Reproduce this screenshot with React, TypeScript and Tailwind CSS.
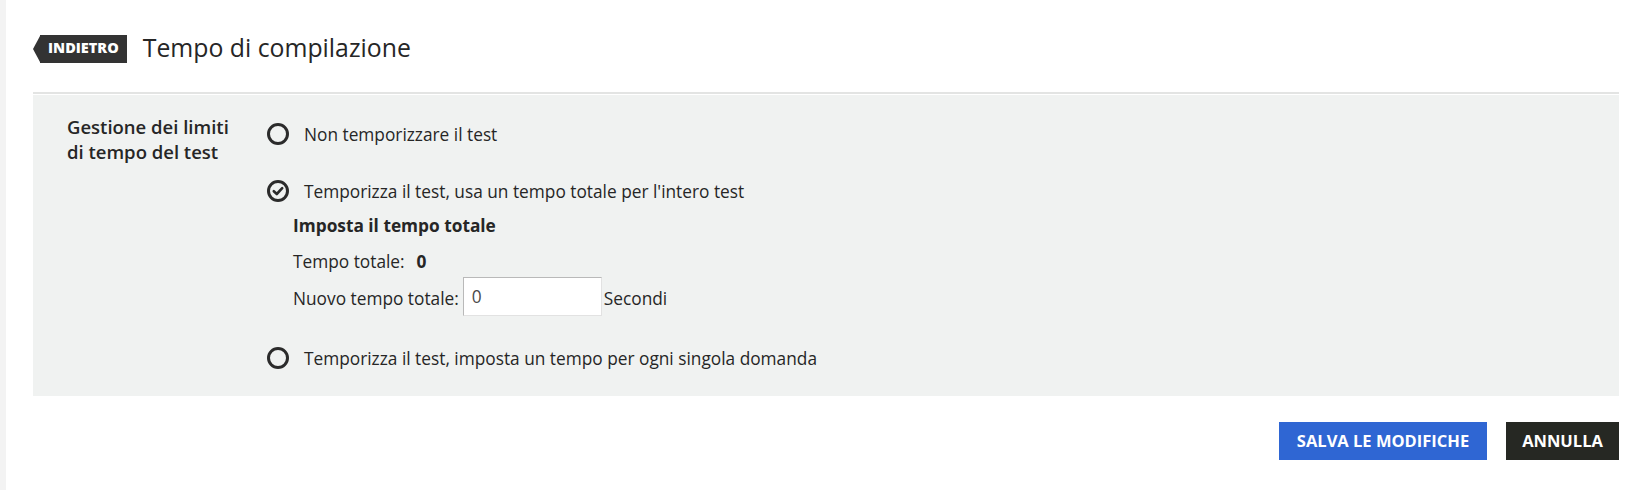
import React from "react";

function RadioOff() {
  return (
    <span className="w-[22px] h-[22px] rounded-full border-[3px] border-[#2b2b2b] shrink-0 box-border" />
  );
}

function RadioOn() {
  return (
    <svg width="22" height="22" viewBox="0 0 22 22" className="shrink-0">
      <circle cx="11" cy="11" r="9.5" fill="none" stroke="#2b2b2b" strokeWidth="3" />
      <path d="M6.8 11.2 L9.8 14 L15.2 8.2" fill="none" stroke="#2b2b2b" strokeWidth="2.6" strokeLinecap="round" strokeLinejoin="round" />
    </svg>
  );
}

export default function App() {
  return (
    <div
      className="min-h-screen bg-white flex text-[#262626]"
      style={{ fontFamily: '"Open Sans", "Noto Sans", sans-serif' }}
    >
      <div className="w-[6px] bg-[#f3f3f3] shrink-0" />
      <div className="flex-1 pl-[27px] pr-[17px]">
        <div className="flex items-center pt-[34px] h-[29px] box-content">
          <div className="flex items-stretch h-[28px]">
            <svg width="7" height="28" viewBox="0 0 7 28" className="block">
              <polygon points="7.5,0 7.5,28 0,14" fill="#333333" />
            </svg>
            <div className="bg-[#333333] text-white text-[14.5px] font-extrabold flex items-center pl-[8px] pr-[8px] leading-none">
              INDIETRO
            </div>
          </div>
          <h1 className="ml-[16px] text-[24.8px] leading-none font-normal text-[#262626] -mt-[2px]">
            Tempo di compilazione
          </h1>
        </div>

        <div className="mt-[29px] border-t-2 border-[#e3e4e3] bg-[#f0f2f1] shadow-[inset_0_1px_0_#ffffff] pl-[34px] flex text-[17.3px]">
          <div className="w-[200px] shrink-0 pt-[20px] font-semibold text-[18.5px] leading-[25px]">
            Gestione dei limiti
            <br />
            di tempo del test
          </div>
          <div className="pt-[28px] pb-[26px]">
            <div className="flex items-center h-6 gap-[15px]">
              <RadioOff />
              <span className="leading-6 mt-[1px]">Non temporizzare il test</span>
            </div>
            <div className="flex items-center h-6 gap-[15px] mt-[33px]">
              <RadioOn />
              <span className="leading-6 mt-[1px]">Temporizza il test, usa un tempo totale per l'intero test</span>
            </div>
            <div className="pl-[26px]">
              <div className="mt-[11px] leading-[23px] font-bold">Imposta il tempo totale</div>
              <div className="mt-[13px] leading-[23px]">
                Tempo totale:<span className="ml-[12px] font-bold">0</span>
              </div>
              <div className="mt-[4px] flex items-center h-[39px]">
                <span className="leading-[23px] mt-[4px]">Nuovo tempo totale:</span>
                <input
                  defaultValue="0"
                  className="ml-[4px] w-[139px] h-[39px] bg-white border border-[#b9b9b9] border-r-[#e2e2e2] border-b-[#e2e2e2] px-[8px] text-[17.3px] text-[#4a4a4a] outline-none"
                  style={{ fontFamily: '"Open Sans", sans-serif' }}
                />
                <span className="ml-[2px] leading-[23px] mt-[4px]">Secondi</span>
              </div>
            </div>
            <div className="flex items-center h-6 gap-[15px] mt-[30px]">
              <RadioOff />
              <span className="leading-6 mt-[1px]">Temporizza il test, imposta un tempo per ogni singola domanda</span>
            </div>
          </div>
        </div>

        <div className="flex justify-end gap-[19px] mt-[26px]">
          <button className="h-[38px] w-[208px] bg-[#2f66d3] text-white text-[16.5px] font-bold">
            SALVA LE MODIFICHE
          </button>
          <button className="h-[38px] w-[113px] bg-[#262823] text-white text-[16.5px] font-bold">
            ANNULLA
          </button>
        </div>
      </div>
    </div>
  );
}
